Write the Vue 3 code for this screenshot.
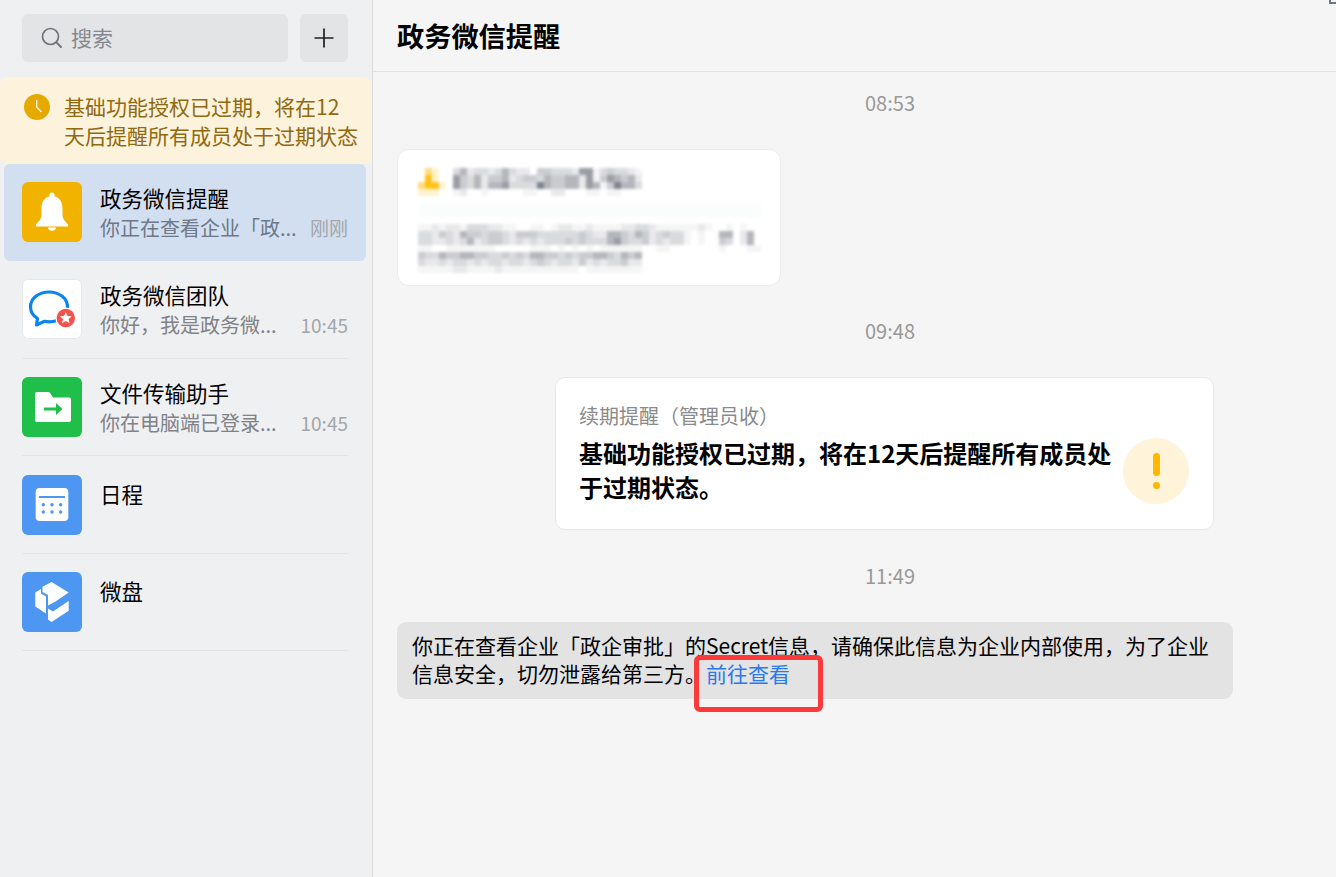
<template>
  <div class="page">
    <aside class="sidebar">
      <div class="search-row">
        <div class="search">
          <svg class="search-icon" width="24" height="24" viewBox="0 0 24 24">
            <circle cx="10.5" cy="10.5" r="8" fill="none" stroke="#6f7278" stroke-width="1.7" />
            <path d="M16.4 16.4 L21 21" stroke="#6f7278" stroke-width="1.9" stroke-linecap="round" />
          </svg>
          <span>搜索</span>
        </div>
        <button class="add">
          <svg width="20" height="20" viewBox="0 0 20 20">
            <path d="M10 .5V19.5M.5 10H19.5" stroke="#1f1f1f" stroke-width="1.7" />
          </svg>
        </button>
      </div>

      <div class="notice">
        <svg class="notice-icon" width="26" height="26" viewBox="0 0 26 26">
          <circle cx="13" cy="13" r="13" fill="#e5a900" />
          <path d="M12.7 6V13L17.5 18" fill="none" stroke="#fdf3dc" stroke-width="1.4" />
        </svg>
        <p>基础功能授权已过期，将在12天后提醒所有成员处于过期状态</p>
      </div>

      <div
        v-for="item in items"
        :key="item.name"
        :class="['item', { active: item.active }]"
      >
        <div class="item-inner">
          <div :class="['avatar', item.kind]">
            <svg v-if="item.kind === 'bell'" width="60" height="60" viewBox="0 0 60 60">
              <circle cx="30" cy="13" r="2.6" fill="#fff" />
              <path d="M30 14C22.5 14 19.5 20 19.5 27V33C19.5 37 16.5 39.5 14 42.5V44.5H46V42.5C43.5 39.5 40.5 37 40.5 33V27C40.5 20 37.5 14 30 14Z" fill="#fff" />
              <path d="M26 45.5H34C34 47.5 32 48.8 30 48.8S26 47.5 26 45.5Z" fill="#fff" />
            </svg>
            <svg v-else-if="item.kind === 'team'" width="60" height="60" viewBox="0 0 60 60">
              <path transform="translate(0 1.5)" d="M27 11.5C16.5 11.5 8.5 18 8.5 26.5C8.5 31.5 11.5 35.5 15.5 38L14.5 44.5L22.5 40.8C24 41.1 25.5 41.3 27 41.3C37.5 41.3 45.5 35 45.5 26.5C45.5 18 37.5 11.5 27 11.5Z" fill="none" stroke="#0a84f0" stroke-width="3.2" stroke-linejoin="round" />
              <circle cx="43.8" cy="39" r="10.5" fill="#fff" />
              <circle cx="43.8" cy="39" r="9.2" fill="#f4524d" />
              <path d="M43.8 33L45.5 37L49.8 37.3L46.5 40L47.6 44.2L43.8 41.9L40 44.2L41.1 40L37.8 37.3L42.1 37Z" fill="#fff" />
            </svg>
            <svg v-else-if="item.kind === 'folder'" width="60" height="60" viewBox="0 0 60 60">
              <path d="M13 17C13 15.9 13.9 15 15 15H26C27 15 27.7 15.4 28.3 16.2L31 20.5H47C48.1 20.5 49 21.4 49 22.5V43C49 44.1 48.1 45 47 45H15C13.9 45 13 44.1 13 43Z" fill="#fff" />
              <path d="M22 32H36" stroke="#20bf4a" stroke-width="3.2" />
              <path d="M34 26L40.5 32L34 38Z" fill="#20bf4a" />
            </svg>
            <svg v-else-if="item.kind === 'calendar'" width="60" height="60" viewBox="0 0 60 60">
              <rect x="13.7" y="13" width="32.6" height="33" rx="4" fill="#fff" />
              <path d="M17 22H43" stroke="#4d97f3" stroke-width="1.8" />
              <g fill="#4d97f3">
                <circle v-for="dot in calendarDots" :key="dot.x + '-' + dot.y" :cx="dot.x" :cy="dot.y" r="1.7" />
              </g>
            </svg>
            <svg v-else width="60" height="60" viewBox="0 0 60 60">
              <g fill="#fff">
                <path d="M13.3 20.5L19 17V21.5L24 24.5V41.5L13.3 34.5Z" />
                <path d="M20.5 14.8L29.5 10L46.7 20.5L33.5 29.5L26 33.5V23L20.5 20Z" />
                <path d="M26 36.5L31 39.5L46.7 29V38.7L29.5 50L26 47.5Z" />
              </g>
            </svg>
          </div>
          <div :class="['item-body', { single: !item.sub }]">
            <div class="item-name">{{ item.name }}</div>
            <div v-if="item.sub" class="item-sub">
              <span>{{ item.sub }}</span>
              <span class="item-time">{{ item.time }}</span>
            </div>
          </div>
        </div>
      </div>
    </aside>

    <main class="main">
      <header class="header">政务微信提醒</header>
      <div class="messages">
        <div class="time">08:53</div>
        <div class="blur-card">
          <div class="mosaic">
            <div v-for="(row, r) in mosaicRows" :key="r" class="mosaic-row">
              <i v-for="(c, n) in row" :key="n" :style="{ background: tone(c) }"></i>
            </div>
          </div>
        </div>

        <div class="time">09:48</div>
        <div class="renew-card">
          <div class="renew-text">
            <div class="renew-label">续期提醒（管理员收）</div>
            <div class="renew-title">基础功能授权已过期，将在12天后提醒所有成员处于过期状态。</div>
          </div>
          <div class="renew-icon">
            <span class="bar"></span>
            <span class="dot"></span>
          </div>
        </div>

        <div class="time">11:49</div>
        <div class="bubble">
          你正在查看企业「政企审批」的Secret信息，请确保此信息为企业内部使用，为了企业信息安全，切勿泄露给第三方。<a class="link">前往查看</a>
          <span class="mark"></span>
        </div>
      </div>
    </main>

    <span class="corner"></span>
  </div>
</template>

<script setup>
const items = [
  { name: '政务微信提醒', sub: '你正在查看企业「政...', time: '刚刚', kind: 'bell', active: true },
  { name: '政务微信团队', sub: '你好，我是政务微...', time: '10:45', kind: 'team' },
  { name: '文件传输助手', sub: '你在电脑端已登录...', time: '10:45', kind: 'folder' },
  { name: '日程', kind: 'calendar' },
  { name: '微盘', kind: 'disk' }
]

const calendarDots = []
for (const y of [29.7, 37]) {
  for (const x of [21.3, 30, 38.7]) calendarDots.push({ x, y })
}

// one char per 7px block of the blurred-out message
const mosaicRows = [
  '0ba00352332353220443332661343321',
  '0ca00643524452344354455261465452',
  'bcca0643525563333754455265147553',
  'aaa00120010000011002200011011000',
  '0',
  'fffffffffffffffffffffffffffffffffffffffffffffffff',
  'fffffffffffffffffffffffffffffffffffffffffffffffff',
  '0',
  '1121221333221100110122112111122332111111210010100',
  '3324325443443244433333343225543542343310100550250',
  '3322323523443232323334343335643342323310100430250',
  '1100111111100000111010101011111100110000000100011',
  '43354455443343435544343445543545',
  '32232332323323323432332423233422',
  '11111221111211111111111011111111'
]

const tones = {
  0: '#ffffff', 1: '#f5f5f6', 2: '#e9e9eb', 3: '#dadbdd', 4: '#cbccd0',
  5: '#b4b6bb', 6: '#9b9da3', 7: '#7f848c',
  a: '#fff3d0', b: '#ffdc80', c: '#ffc21a', f: '#fbfcfc'
}
const tone = (c) => tones[c] || '#ffffff'
</script>

<style scoped>
.page {
  display: flex;
  position: relative;
  height: 877px;
  overflow: hidden;
  font-family: "Noto Sans CJK SC", "Liberation Sans", sans-serif;
  color: #000;
}

.sidebar {
  flex: 0 0 372px;
  background: #eff0f2;
  border-right: 1px solid #dcdcdc;
}

.search-row {
  display: flex;
  gap: 12px;
  padding: 14px 24px 0 22px;
  margin-bottom: 15px;
}

.search {
  flex: 1;
  height: 48px;
  box-sizing: border-box;
  display: flex;
  align-items: center;
  gap: 7px;
  padding: 0 0 2px 18px;
  border-radius: 6px;
  background: #e3e4e6;
  font-size: 21px;
  color: #85888e;
}

.search-icon {
  flex: none;
  margin-top: 2px;
}

.add {
  width: 48px;
  height: 48px;
  padding: 0;
  border: none;
  border-radius: 6px;
  background: #e3e4e6;
  display: flex;
  align-items: center;
  justify-content: center;
}

.notice {
  display: flex;
  gap: 14px;
  height: 87px;
  box-sizing: border-box;
  padding: 15px 13px 0 24px;
  border-radius: 8px;
  background: #fdf3dc;
  color: #8f6a10;
}

.notice-icon {
  flex: none;
  margin-top: 2px;
}

.notice p {
  margin: 0;
  font-size: 21px;
  line-height: 29px;
}

.item {
  height: 97.6px;
  box-sizing: border-box;
  margin: 0 6px 0 4px;
  padding: 0 18px;
  border-radius: 6px;
}

.item.active {
  height: 97px;
  background: #d2dff0;
}

.item-inner {
  display: flex;
  gap: 18px;
  height: 100%;
  box-sizing: border-box;
  padding-top: 18.4px;
  border-bottom: 1px solid #e4e5e7;
}

.item.active .item-inner {
  padding-top: 18px;
  border-bottom-color: transparent;
}

.avatar {
  flex: none;
  width: 60px;
  height: 60px;
  border-radius: 6px;
  overflow: hidden;
}

.avatar svg {
  display: block;
}

.avatar.bell {
  background: #f2b200;
}

.avatar.team {
  background: #fff;
  box-shadow: inset 0 0 0 1px #e8e8e8;
}

.avatar.folder {
  background: #20bf4a;
}

.avatar.calendar,
.avatar.disk {
  background: #4d97f3;
}

.item-body {
  flex: 1;
  min-width: 0;
  padding-top: 1px;
}

.item-body.single {
  padding-top: 4px;
}

.item-name {
  font-size: 21.5px;
  line-height: 29px;
}

.item-sub {
  display: flex;
  justify-content: space-between;
  margin-top: 1px;
  font-size: 20px;
  line-height: 29px;
  color: #7f8286;
  white-space: nowrap;
}

.item.active .item-sub {
  color: #6d7889;
}

.item-time {
  font-size: 19px;
  color: #a3a6ab;
}

.main {
  flex: 1;
  min-width: 0;
  background: #f5f5f5;
}

.header {
  height: 71px;
  line-height: 71px;
  padding-left: 24px;
  border-bottom: 1px solid #e3e3e3;
  font-size: 27.2px;
  font-weight: 700;
}

.messages {
  width: 986px;
  padding: 17px 0 0 24px;
}

.time {
  height: 28px;
  line-height: 27px;
  margin-bottom: 32px;
  text-align: center;
  font-size: 20px;
  color: #999;
}

.blur-card {
  width: 384px;
  height: 137px;
  box-sizing: border-box;
  margin-bottom: 31px;
  padding: 18px 0 0 20px;
  border: 1px solid #ececec;
  border-radius: 12px;
  background: #fff;
  overflow: hidden;
}

.mosaic {
  filter: blur(1.5px);
}

.mosaic-row {
  display: flex;
  height: 7px;
}

.mosaic-row i {
  flex: none;
  width: 7px;
  height: 7px;
}

.renew-card {
  width: 659px;
  height: 153px;
  box-sizing: border-box;
  margin: 0 0 32px 158px;
  padding: 24px 23px 0;
  display: flex;
  border: 1px solid #e8e8e8;
  border-radius: 10px;
  background: #fff;
}

.renew-text {
  width: 534px;
  flex: none;
}

.renew-label {
  font-size: 20px;
  line-height: 28px;
  color: #8a8a8a;
}

.renew-title {
  margin-top: 6px;
  font-size: 24px;
  line-height: 34px;
  font-weight: 700;
}

.renew-icon {
  flex: none;
  width: 66px;
  height: 66px;
  margin: 36px 0 0 10px;
  border-radius: 50%;
  background: #fff3d9;
  display: flex;
  flex-direction: column;
  align-items: center;
  padding-top: 15px;
  box-sizing: border-box;
}

.renew-icon .bar {
  width: 7px;
  height: 23px;
  border-radius: 4px;
  background: #ffb800;
}

.renew-icon .dot {
  width: 7px;
  height: 7px;
  margin-top: 6px;
  border-radius: 50%;
  background: #ffb800;
}

.bubble {
  position: relative;
  width: 836px;
  height: 77px;
  box-sizing: border-box;
  padding: 9px 20px 0 15px;
  border-radius: 9px;
  background: #e3e3e3;
  font-size: 21px;
  line-height: 28px;
}

.link {
  color: #2a78f0;
}

.mark {
  position: absolute;
  left: 297px;
  top: 33px;
  width: 129px;
  height: 57px;
  box-sizing: border-box;
  border: 5px solid #fb3b3b;
  border-radius: 6px;
}

.corner {
  position: absolute;
  top: -2px;
  right: -2px;
  width: 9px;
  height: 6px;
  box-sizing: border-box;
  border: 2px solid #6f7787;
}
</style>

<style>
html,
body {
  background: #f5f5f5;
}
</style>
